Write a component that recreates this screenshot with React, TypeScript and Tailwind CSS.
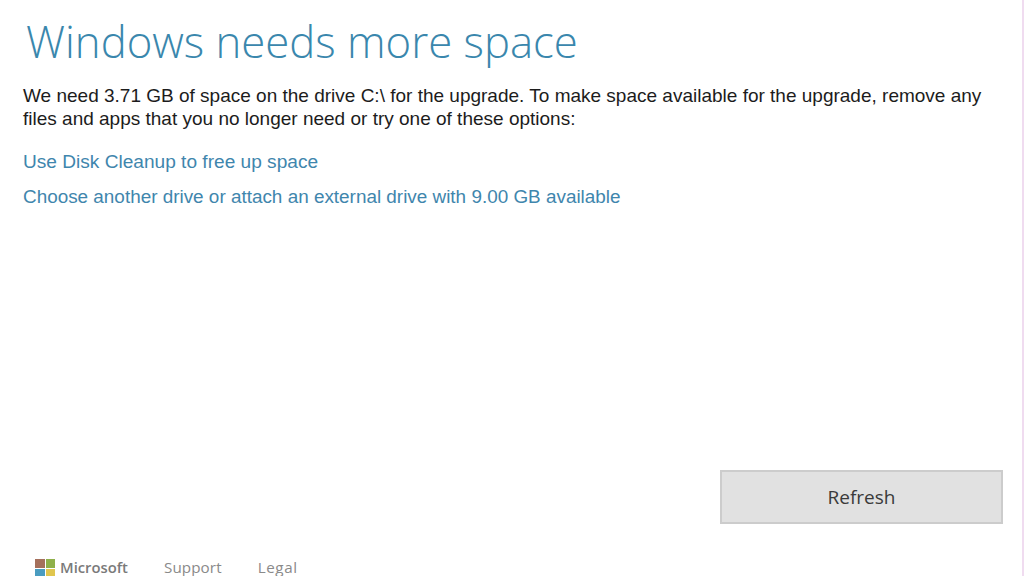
const MS_SQUARES = ['bg-[#a5705c]', 'bg-[#8fb04a]', 'bg-[#4a9cc0]', 'bg-[#e0c64e]'];

export default function App() {
  return (
    <div className="flex h-[576px] w-[1024px] overflow-hidden bg-white font-['Liberation_Sans',sans-serif]">
      <div className="flex min-w-0 flex-1 flex-col pl-[23px] pr-[18px] pt-[13px]">
        <h1 className="pl-[3px] font-['Open_Sans',sans-serif] text-[43.7px] font-light leading-[56px] text-[#3a87ad]">
          Windows needs more space
        </h1>
        <p className="mt-[15px] text-[19px] leading-[23px] text-[#1c1c1c]">
          We need 3.71 GB of space on the drive C:\ for the upgrade. To make space available for the upgrade, remove any
          files and apps that you no longer need or try one of these options:
        </p>
        <a className="mt-[20px] text-[19.1px] leading-[23px] text-[#3f86ad]">Use Disk Cleanup to free up space</a>
        <a className="mt-[12px] text-[18.9px] leading-[23px] text-[#3f86ad]">
          Choose another drive or attach an external drive with 9.00 GB available
        </a>
        <div className="mt-auto flex justify-end">
          <button className="mr-[1px] h-[54px] w-[283px] border-2 border-[#cccccc] bg-[#e1e1e1] font-['Open_Sans',sans-serif] text-[19px] font-medium text-[#3a3a3a]">
            Refresh
          </button>
        </div>
        <div className="mt-[33px] flex h-[19px] items-start pl-[12px] font-['Open_Sans',sans-serif] text-[15.2px] leading-[21px] text-[#8a8a8a]">
          <div className="mt-[2px] grid h-[19px] w-[20px] shrink-0 grid-cols-2 gap-[1px]">
            {MS_SQUARES.map((c) => (
              <span key={c} className={c} />
            ))}
          </div>
          <span className="ml-[5px] text-[14.8px] font-semibold text-[#7a7a7a]">Microsoft</span>
          <span className="ml-[36px] tracking-[0.1px]">Support</span>
          <span className="ml-[36px] tracking-[0.6px]">Legal</span>
        </div>
      </div>
      <div className="w-[2px] shrink-0 bg-[#f0dcf0]" />
    </div>
  );
}
